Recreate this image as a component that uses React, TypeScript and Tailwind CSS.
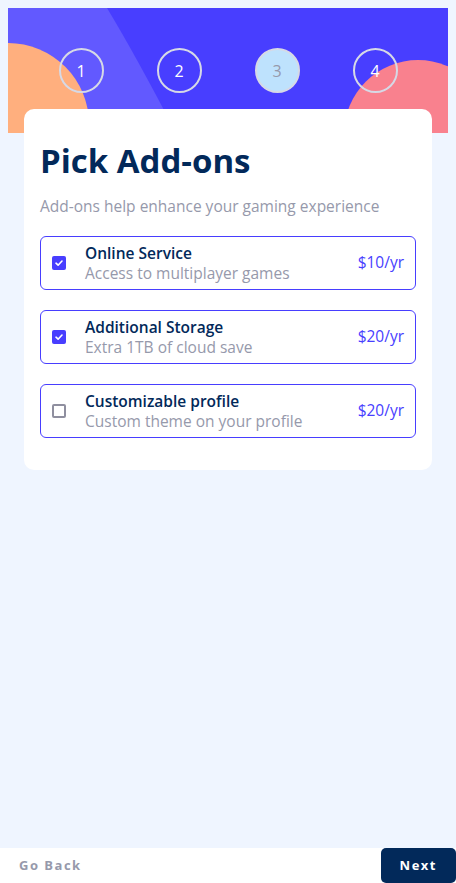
import React, { useState } from 'react';

const steps = [1, 2, 3, 4];

const addons = [
  { name: 'Online Service', desc: 'Access to multiplayer games', price: '$10/yr', on: true },
  { name: 'Additional Storage', desc: 'Extra 1TB of cloud save', price: '$20/yr', on: true },
  { name: 'Customizable profile', desc: 'Custom theme on your profile', price: '$20/yr', on: false },
];

const font = { fontFamily: '"Open Sans", "Noto Sans", sans-serif' };

const Banner = () => (
  <div className="relative h-[125px] overflow-hidden bg-[#483eff]">
    <svg className="absolute inset-0" width="440" height="125" viewBox="0 0 440 125">
      <path d="M0 0 H99 Q128 48 168 125 H0 Z" fill="#6259ff" />
      <circle cx="0" cy="116" r="81" fill="#ffaf7e" />
      <circle cx="410" cy="126" r="74" fill="#f9818e" />
    </svg>
    <div className="relative flex justify-center gap-[53px] pt-[40px]">
      {steps.map((n) => (
        <div
          key={n}
          className={
            n === 3
              ? 'flex h-[45px] w-[45px] items-center justify-center rounded-full border-2 border-[#d6d9e6] bg-[#bee2fd] text-[16px] font-medium text-[#9699ab]'
              : 'flex h-[45px] w-[45px] items-center justify-center rounded-full border-2 border-[#d6d9e6] text-[16px] font-medium text-white'
          }
        >
          {n}
        </div>
      ))}
    </div>
  </div>
);

const Check = ({ on }: { on: boolean }) =>
  on ? (
    <span className="flex h-[14px] w-[14px] shrink-0 items-center justify-center rounded-[2px] bg-[#483eff]">
      <svg width="10" height="10" viewBox="0 0 10 10">
        <path d="M2 5.2 L4.1 7.2 L8 3" fill="none" stroke="white" strokeWidth="1.6" strokeLinecap="round" strokeLinejoin="round" />
      </svg>
    </span>
  ) : (
    <span className="h-[14px] w-[14px] shrink-0 rounded-[2px] border-2 border-[#8f8f9f] bg-white" />
  );

export default function App() {
  const [items, setItems] = useState(addons);

  const toggle = (i: number) =>
    setItems((prev) => prev.map((it, j) => (j === i ? { ...it, on: !it.on } : it)));

  return (
    <div className="flex h-[883px] flex-col bg-[#eff5ff]" style={font}>
      <div className="px-2 pt-2">
        <Banner />
        {/* Add-ons card */}
        <div className="relative mx-4 -mt-[24px] rounded-[10px] bg-white px-4 pb-[32px] pt-[32px]">
          <h1 className="text-[33px] font-bold leading-[40px] text-[#02295a]">Pick Add-ons</h1>
          <p className="mt-[13px] text-[15.5px] leading-[24px] text-[#9699ab]">
            Add-ons help enhance your gaming experience
          </p>
          <div className="mt-[18px] flex flex-col gap-[20px]">
            {items.map((it, i) => (
              <button
                key={it.name}
                onClick={() => toggle(i)}
                className="flex items-center rounded-[6px] border border-[#483eff] py-[6px] pl-[11px] pr-[11px] text-left"
              >
                <Check on={it.on} />
                <div className="ml-[19px] flex-1">
                  <div className="text-[15.5px] font-semibold leading-[20px] text-[#02295a]">{it.name}</div>
                  <div className="text-[15.5px] leading-[20px] text-[#9699ab]">{it.desc}</div>
                </div>
                <span className="text-[15.5px] text-[#483eff]">{it.price}</span>
              </button>
            ))}
          </div>
        </div>
      </div>

      <div className="flex-1" />

      <div className="flex h-[35px] items-center justify-between bg-white">
        <button className="pl-[19px] text-[13px] font-bold tracking-[1.5px] text-[#9699ab]">Go Back</button>
        <button className="h-full rounded-[5px] bg-[#02295a] px-[19px] text-[13px] font-bold tracking-[1.5px] text-white">
          Next
        </button>
      </div>
    </div>
  );
}
